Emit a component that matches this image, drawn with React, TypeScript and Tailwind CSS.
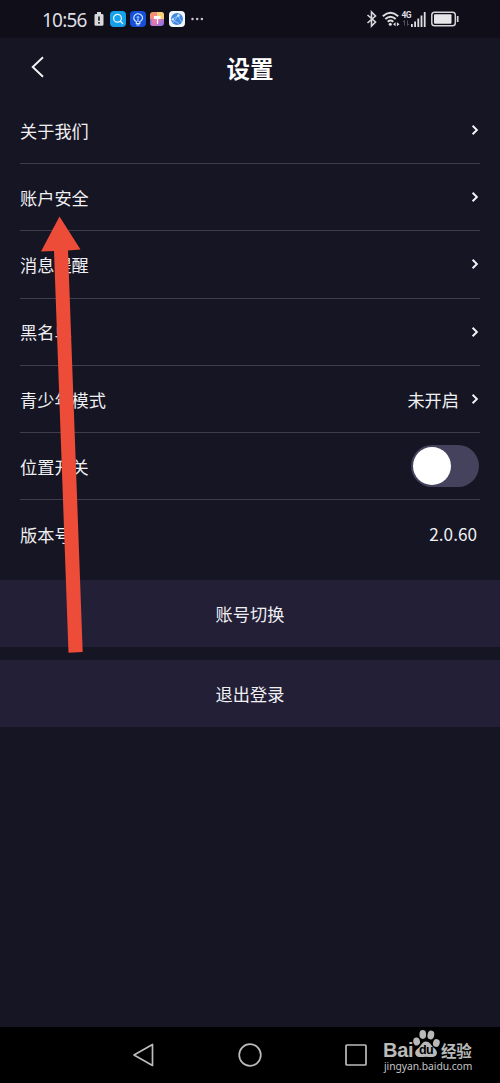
import type { ReactNode } from "react";

function Chevron() {
  return (
    <svg className="ml-[12px] mr-[1px] h-[12px] w-[8px]" viewBox="0 0 8 12" fill="none" stroke="#f4f4f7" strokeWidth="1.9">
      <path d="M1.6 1.8 5.9 6 1.6 10.2" />
    </svg>
  );
}

function Row({ label, children, last = false }: { label: string; children?: ReactNode; last?: boolean }) {
  return (
    <div className={last ? "flex h-[67px] items-center justify-between" : "flex h-[67.25px] items-center justify-between border-b border-[#3f3d4c]"}>
      <span className="pt-[1.500px] leading-6">{label}</span>
      <div className="flex items-center">{children}</div>
    </div>
  );
}

function StatusBar() {
  return (
    <header className="flex h-[38px] shrink-0 items-center bg-[#0f0e19] pl-[42px] pr-[41.500px]">
      <span className="w-[46px] whitespace-nowrap pt-[2px] font-['Noto_Sans',sans-serif] text-[19px] leading-6 tracking-[-0.8px] text-[#dedee2]">10:56</span>
      <svg className="ml-[6px] h-[16px] w-[10px]" viewBox="0 0 10 16">
        <path d="M3 1h4v2h1.2q1.3 0 1.3 1.3v9.2q0 1.3-1.3 1.3H1.8Q.5 14.8.5 13.500V4.300Q.5 3 1.800 3H3Z" fill="#d9d9dc" />
        <path d="M5 5.500v4.200M5 11v1.700" stroke="#262530" strokeWidth="1.700" />
      </svg>
      <svg className="ml-[6px] h-[16px] w-[16px]" viewBox="0 0 16 16" fill="none">
        <rect width="16" height="16" rx="4" fill="#16a0ec" />
        <circle cx="7.500" cy="7.300" r="3.900" stroke="#e9f7ff" strokeWidth="1.200" />
        <path d="m10.400 10.200 2.300 2.400" stroke="#e9f7ff" strokeWidth="1.300" strokeLinecap="round" />
      </svg>
      <svg className="ml-[4px] h-[16px] w-[16px]" viewBox="0 0 16 16" fill="none">
        <rect width="16" height="16" rx="4" fill="#164fd8" />
        <path d="M6.300 10.500C3.700 9.500 3.100 6.800 4.400 4.700S8.500 2.300 10.500 3.500s2.600 3.500 1.500 5.200c-.5.900-1.300 1.300-2.200 1.800v2.200H6.300Z" stroke="#d8e8ff" strokeWidth="1.200" />
        <circle cx="8" cy="6.400" r="1.400" fill="#71bbff" />
        <path d="M8 8v3M6.500 14h3" stroke="#d8e8ff" />
      </svg>
      <svg className="ml-[4px] h-[14px] w-[14px]" viewBox="0 0 14 14">
        <defs>
          <linearGradient id="warm" x2="1" y2="1">
            <stop stopColor="#f6a14e" />
            <stop offset=".48" stopColor="#f477ad" />
            <stop offset="1" stopColor="#7773ed" />
          </linearGradient>
          <linearGradient id="side" x2="1">
            <stop stopColor="#5274f1" />
            <stop offset=".6" stopColor="#ef719a" stopOpacity="0" />
          </linearGradient>
        </defs>
        <rect width="14" height="14" rx="3" fill="url(#warm)" />
        <path d="M0 7h7v7H3q-3 0-3-3Z" fill="url(#side)" />
        <path d="M7 0h4q3 0 3 3v4H7Z" fill="#f8cf75" />
        <path d="M4.500 4.500h5.500v2H4.500ZM7.500 6v6" fill="#fff" stroke="#fff" strokeWidth="1.200" />
      </svg>
      <svg className="ml-[5px] h-[16px] w-[16px]" viewBox="0 0 16 16">
        <rect width="16" height="16" rx="4" fill="#f2f7ff" />
        <circle cx="8" cy="8" r="6" fill="#4188df" />
        <path d="M2.300 8.500 10 4.300M4 12l5-7.500 3.800 6.800M2.500 8.500l7.500 4" stroke="#9bcaff" strokeWidth=".8" fill="none" />
        <circle cx="9.500" cy="4.500" r="1.300" fill="#d8eaff" />
        <circle cx="4" cy="8.300" r="1" fill="#d8eaff" />
      </svg>
      <svg className="ml-[6px] h-[4px] w-[13px]" viewBox="0 0 13 4" fill="#c8c8ce">
        <circle cx="1.500" cy="2" r="1.250" />
        <circle cx="6.200" cy="2" r="1.250" />
        <circle cx="10.900" cy="2" r="1.250" />
      </svg>
      <div className="ml-auto flex items-center">
        <svg className="h-[18px] w-[12px]" viewBox="0 0 12 18" fill="none" stroke="#d9d9dd" strokeWidth="1.600">
          <path d="m1.500 5 8 7-4 4V2l4 4-8 7" />
        </svg>
        <svg className="ml-[4px] h-[16px] w-[18px]" viewBox="0 0 18 16" fill="none" stroke="#dedee2" strokeWidth="1.900">
          <path d="M.8 5.200Q8.500-1.700 16.200 5.200M3.300 8Q8.500 3.300 13.700 8M5.700 10.700q2.800-2.400 5.600 0" />
          <circle cx="8.300" cy="13.200" r="1.500" fill="#dedee2" stroke="none" />
          <path d="m11 13.200 2.600-2v4ZM17.500 13.200l-2.600-2v4Z" fill="#dedee2" stroke="none" />
        </svg>
        <div className="ml-[2px] h-[16px] w-[9px]">
          <div className="font-['Roboto',sans-serif] text-[8.500px] font-bold leading-[9px] tracking-[-0.7px] text-[#dedee2]">4G</div>
          <svg className="h-[6px] w-[8px]" viewBox="0 0 8 6" fill="none" stroke="#62616b" strokeWidth=".8">
            <path d="M2.500 5.500v-5L1 2M5.500.500v5L7 4" />
          </svg>
        </div>
        <svg className="h-[15px] w-[15px]" viewBox="0 0 15 15" fill="#dedee2">
          <path d="M0 12h1.800v3H0ZM3.200 9.500H5V15H3.200ZM6.400 6.500h1.800V15H6.400ZM9.600 3.500h1.800V15H9.600ZM12.800 0h1.800v15h-1.800Z" />
        </svg>
        <svg className="ml-[5px] h-[16px] w-[28px]" viewBox="0 0 28 16" fill="none">
          <rect x=".8" y="1.200" width="23.500" height="13.600" rx="2.800" stroke="#d4d4d9" strokeWidth="1.500" />
          <rect x="3" y="3.300" width="17.500" height="9.400" rx="1" fill="#e7e7ea" />
          <path d="M26.700 5v6" stroke="#d4d4d9" strokeWidth="1.700" />
        </svg>
      </div>
    </header>
  );
}

function Watermark() {
  return (
    <div className="absolute bottom-[10px] left-[383px] flex w-[92px] flex-col text-[#bababa]">
      <div className="flex h-[29px] items-end">
        <span className="-mb-[2px] w-[30px] whitespace-nowrap font-['Liberation_Sans',sans-serif] text-[20px] font-bold leading-[22px] tracking-[-0.3px]">Bai</span>
        <div className="relative h-[30px] w-[27px]">
          <svg className="h-[29px] w-[27px]" viewBox="0 0 26 29" preserveAspectRatio="none" fill="#b9b9b9">
            <ellipse cx="3.500" cy="12.500" rx="3.200" ry="4" transform="rotate(-12 3.500 12.500)" />
            <ellipse cx="9.400" cy="5.500" rx="3.200" ry="4.400" />
            <ellipse cx="17.200" cy="6" rx="3.200" ry="4.400" transform="rotate(12 17.200 6)" />
            <ellipse cx="22.500" cy="14" rx="3.200" ry="4" transform="rotate(15 22.500 14)" />
            <path d="M12.500 12.500c3.300 0 4.900 3.500 7 5.800 3.300 3 4.400 5 3 7.800-1.600 2.600-4.800 2-9.800 1.700-5.400.3-8.600.9-10-1.900-1.500-3 .2-5.100 3.100-7.500 2.400-2.200 3.400-5.900 6.700-5.900Z" />
          </svg>
          <span className="absolute left-[6px] top-[14px] font-['Liberation_Sans',sans-serif] text-[12.500px] font-bold leading-[14px] tracking-[-0.6px] text-black">du</span>
        </div>
        <span className="-mb-[2px] whitespace-nowrap pl-[1px] text-[15.500px] font-bold leading-[22px] tracking-[-0.3px]">经验</span>
      </div>
      <span className="whitespace-nowrap pl-[1px] font-['Noto_Sans',sans-serif] text-[10.300px] leading-[14px] tracking-[-0.05px] text-[#c4c4c4]">jingyan.baidu.com</span>
    </div>
  );
}

export default function App() {
  return (
    <div className="relative flex h-[1083px] w-[500px] flex-col overflow-hidden bg-[#161523] font-['Noto_Sans_CJK_SC',sans-serif] text-[17.200px] text-[#f0f0f3]">
      <StatusBar />
      <div className="grid h-[58px] shrink-0 grid-cols-[80px_1fr_80px] items-center">
        <button aria-label="返回" className="pl-[30px]">
          <svg className="h-[24px] w-[15px]" viewBox="0 0 15 24" fill="none" stroke="#f4f4f6" strokeWidth="1.900">
            <path d="M13 2.200 2.700 12 13 21.800" />
          </svg>
        </button>
        <h1 className="pt-[2px] text-center text-[23.500px] font-bold leading-8 text-white">设置</h1>
      </div>
      <main className="px-[20px] pt-[0.750px]">
        <Row label="关于我们"><Chevron /></Row>
        <Row label="账户安全"><Chevron /></Row>
        <Row label="消息提醒"><Chevron /></Row>
        <Row label="黑名单"><Chevron /></Row>
        <Row label="青少年模式">
          <span className="pt-[2px] leading-6">未开启</span>
          <Chevron />
        </Row>
        <Row label="位置开关">
          <button role="switch" aria-checked="false" aria-label="位置开关" className="mr-[1px] flex h-[42px] w-[68px] items-center rounded-full bg-[#45425d] pl-[2px]">
            <span className="h-[38px] w-[38px] rounded-full bg-white" />
          </button>
        </Row>
        <Row label="版本号" last>
          <span className="mr-[3px] leading-6">2.0.60</span>
        </Row>
      </main>
      <div className="mt-[12.750px] flex shrink-0 flex-col gap-[13px]">
        <button className="h-[67px] bg-[#221f37] pt-[1px]">账号切换</button>
        <button className="h-[67px] bg-[#221f37] pt-[1px]">退出登录</button>
      </div>
      <nav className="mt-auto grid h-[56px] shrink-0 grid-cols-[106px_106px_106px] justify-center bg-black">
        <div className="flex items-center justify-center">
          <svg className="h-[24px] w-[24px]" viewBox="0 0 24 24" fill="none" stroke="#bcbcbc" strokeWidth="1.700" strokeLinejoin="round">
            <path d="M20.500 1.500v21L2 12Z" />
          </svg>
        </div>
        <div className="flex items-center justify-center">
          <svg className="h-[24px] w-[24px]" viewBox="0 0 24 24" fill="none" stroke="#bcbcbc" strokeWidth="1.700">
            <circle cx="12" cy="12" r="10.800" />
          </svg>
        </div>
        <div className="flex items-center justify-center">
          <svg className="h-[24px] w-[24px]" viewBox="0 0 24 24" fill="none" stroke="#bcbcbc" strokeWidth="1.700">
            <rect x="2" y="2" width="20" height="20" rx="1" />
          </svg>
        </div>
      </nav>
      <svg className="absolute left-[38px] top-[214px] h-[442px] w-[48px]" viewBox="38 214 48 442">
        <path d="M59.500 216.500 80.500 249.500 68 250.500 82.700 652 68.500 652.700 54 251 41 251.500Z" fill="#ed4c38" />
      </svg>
      <Watermark />
    </div>
  );
}
